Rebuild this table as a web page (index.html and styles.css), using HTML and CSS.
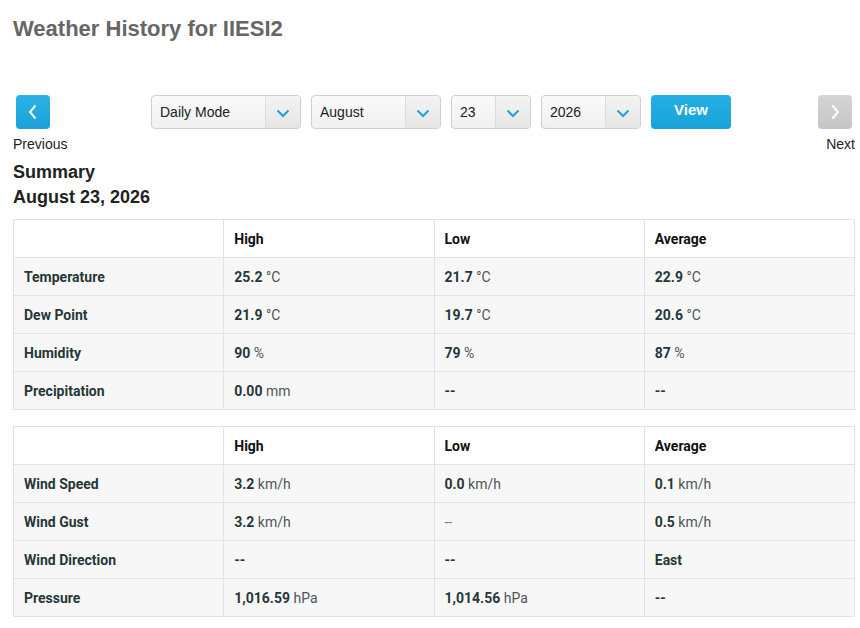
FILE: index.html
```html
<!DOCTYPE html>
<html>
<head>
<meta charset="utf-8">
<link rel="stylesheet" href="styles.css">
</head>
<body>
<div class="page">
  <h1 class="title">Weather History for IIESI2</h1>

  <div class="controls">
    <div class="nav nav-prev">
      <button class="nav-btn nav-btn-blue" aria-label="Previous">
        <svg width="14" height="18" viewBox="0 0 14 18"><path d="M9.5 2.5 L4 9 L9.5 15.5" fill="none" stroke="#fff" stroke-width="2"/></svg>
      </button>
      <span class="nav-label">Previous</span>
    </div>

    <div class="pickers">
      <div class="select w-mode"><span class="select-text">Daily Mode</span><span class="select-arrow"><svg width="14" height="9" viewBox="0 0 14 9"><path d="M1.5 1.5 L7 7 L12.5 1.5" fill="none" stroke="#1e9fd6" stroke-width="2"/></svg></span></div>
      <div class="select w-month"><span class="select-text">August</span><span class="select-arrow"><svg width="14" height="9" viewBox="0 0 14 9"><path d="M1.5 1.5 L7 7 L12.5 1.5" fill="none" stroke="#1e9fd6" stroke-width="2"/></svg></span></div>
      <div class="select w-day"><span class="select-text">23</span><span class="select-arrow"><svg width="14" height="9" viewBox="0 0 14 9"><path d="M1.5 1.5 L7 7 L12.5 1.5" fill="none" stroke="#1e9fd6" stroke-width="2"/></svg></span></div>
      <div class="select w-year"><span class="select-text">2026</span><span class="select-arrow"><svg width="14" height="9" viewBox="0 0 14 9"><path d="M1.5 1.5 L7 7 L12.5 1.5" fill="none" stroke="#1e9fd6" stroke-width="2"/></svg></span></div>
      <button class="view-btn">View</button>
    </div>

    <div class="nav nav-next">
      <button class="nav-btn nav-btn-grey" aria-label="Next">
        <svg width="14" height="18" viewBox="0 0 14 18"><path d="M4.5 2.5 L10 9 L4.5 15.5" fill="none" stroke="#fff" stroke-width="2"/></svg>
      </button>
      <span class="nav-label">Next</span>
    </div>
  </div>

  <h2 class="summary">Summary<br>August 23, 2026</h2>

  <table class="data">
    <tr class="head"><th></th><th>High</th><th>Low</th><th>Average</th></tr>
    <tr><td class="lbl">Temperature</td><td><b>25.2</b> <span class="u">°C</span></td><td><b>21.7</b> <span class="u">°C</span></td><td><b>22.9</b> <span class="u">°C</span></td></tr>
    <tr><td class="lbl">Dew Point</td><td><b>21.9</b> <span class="u">°C</span></td><td><b>19.7</b> <span class="u">°C</span></td><td><b>20.6</b> <span class="u">°C</span></td></tr>
    <tr><td class="lbl">Humidity</td><td><b>90</b> <span class="u">%</span></td><td><b>79</b> <span class="u">%</span></td><td><b>87</b> <span class="u">%</span></td></tr>
    <tr><td class="lbl">Precipitation</td><td><b>0.00</b> <span class="u">mm</span></td><td><b>--</b></td><td><b>--</b></td></tr>
  </table>

  <table class="data second">
    <tr class="head"><th></th><th>High</th><th>Low</th><th>Average</th></tr>
    <tr><td class="lbl">Wind Speed</td><td><b>3.2</b> <span class="u">km/h</span></td><td><b>0.0</b> <span class="u">km/h</span></td><td><b>0.1</b> <span class="u">km/h</span></td></tr>
    <tr><td class="lbl">Wind Gust</td><td><b>3.2</b> <span class="u">km/h</span></td><td><span class="dash">--</span></td><td><b>0.5</b> <span class="u">km/h</span></td></tr>
    <tr><td class="lbl">Wind Direction</td><td><b>--</b></td><td><b>--</b></td><td><b>East</b></td></tr>
    <tr><td class="lbl">Pressure</td><td><b>1,016.59</b> <span class="u">hPa</span></td><td><b>1,014.56</b> <span class="u">hPa</span></td><td><b>--</b></td></tr>
  </table>
</div>
</body>
</html>
```

FILE: styles.css
```css
* { box-sizing: border-box; }
html, body { margin: 0; padding: 0; background: #fff; }
body { font-family: "Liberation Sans", Arial, sans-serif; color: #222; }

.page { padding: 17px 5px 0 13px; }

.title {
  margin: 0;
  font-size: 22px;
  line-height: 24px;
  font-weight: bold;
  color: #666;
}

.controls {
  display: flex;
  align-items: flex-start;
  margin-top: 54px;
  height: 57px;
}

.nav { display: flex; flex-direction: column; }
.nav-prev { align-items: flex-start; width: 138px; }
.nav-prev .nav-btn { margin-left: 3px; }
.nav-next { margin-left: auto; align-items: flex-end; }
.nav-next .nav-btn { margin-right: 3px; }

.nav-btn {
  width: 34px;
  height: 34px;
  border: none;
  border-radius: 4px;
  padding: 0;
  display: flex;
  align-items: center;
  justify-content: center;
}
.nav-btn-blue { background: linear-gradient(#2bb2e5, #1aa3d9); }
.nav-btn-grey { background: linear-gradient(#d4d4d4, #c6c6c6); }

.nav-label {
  margin-top: 7px;
  font-size: 14px;
  line-height: 16px;
  color: #222;
}

.pickers { display: flex; gap: 10px; }

.select {
  height: 34px;
  display: flex;
  border: 1px solid #cfcfcf;
  border-radius: 4px;
  background: linear-gradient(#fafafa, #f0f0f0);
  overflow: hidden;
}
.w-mode { width: 150px; }
.w-month { width: 130px; }
.w-day { width: 80px; }
.w-year { width: 100px; }

.select-text {
  flex: 1;
  padding-left: 8px;
  font-size: 14px;
  line-height: 32px;
  color: #222;
}
.select-arrow {
  width: 35px;
  border-left: 1px solid #dcdcdc;
  background: linear-gradient(#f3f3f3, #e6e6e6);
  display: flex;
  align-items: center;
  justify-content: center;
  padding-top: 3px;
}

.view-btn {
  width: 80px;
  height: 34px;
  border: none;
  border-radius: 4px;
  background: linear-gradient(#25b0e3, #17a2da);
  color: #fff;
  font-family: "Liberation Sans", Arial, sans-serif;
  font-weight: bold;
  font-size: 15px;
  padding: 0 0 5px;
}

.summary {
  margin: 8px 0 0;
  font-size: 18px;
  line-height: 25px;
  font-weight: bold;
  color: #222;
}

.data {
  margin-top: 9px;
  width: 842px;
  border-collapse: collapse;
  table-layout: fixed;
  font-family: Roboto, "Liberation Sans", sans-serif;
  font-size: 14px;
}
.data.second { margin-top: 16px; }

.data th, .data td {
  border: 1px solid #e2e2e2;
  height: 38px;
  padding: 0 10px;
  text-align: left;
  vertical-align: middle;
}
.data th { background: #fff; font-weight: bold; color: #111; }
.data td { background: #f7f7f7; color: #26373a; }
.data td.lbl { font-weight: bold; }
.data td b { font-weight: bold; color: #26373a; }
.data .u { color: #4e5557; }
.data .dash { color: #777; }
```
